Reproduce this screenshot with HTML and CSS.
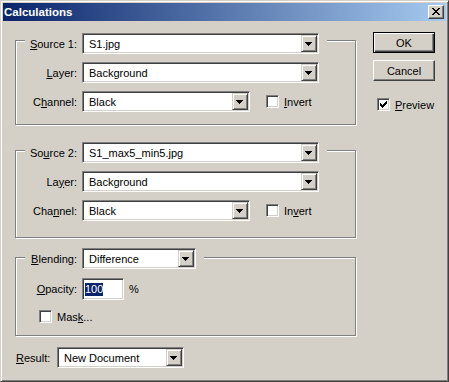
FILE: index.html
```html
<!DOCTYPE html>
<html>
<head>
<meta charset="utf-8">
<title>Calculations</title>
<link rel="stylesheet" href="styles.css">
</head>
<body>
<div class="window">
  <div class="titlebar">
    <span class="title">Calculations</span>
    <span class="close"><svg class="x" width="8" height="7" viewBox="0 0 8 7"><path d="M0 0h2v1H0zM6 0h2v1H6zM1 1h2v1H1zM5 1h2v1H5zM2 2h4v1H2zM3 3h2v1H3zM2 4h4v1H2zM1 5h2v1H1zM5 5h2v1H5zM0 6h2v1H0zM6 6h2v1H6z"/></svg></span>
  </div>
  <div class="content">
    <div class="left">
      <div class="group g1">
        <div class="row head">
          <span class="lbl"><u>S</u>ource 1:</span>
          <span class="combo w-full"><span class="val">S1.jpg</span><span class="drop"><svg width="7" height="4" viewBox="0 0 7 4"><path d="M0 0h7v1H0zM1 1h5v1H1zM2 2h3v1H2zM3 3h1v1H3z"/></svg></span></span>
        </div>
        <div class="row">
          <span class="lbl"><u>L</u>ayer:</span>
          <span class="combo w-full"><span class="val">Background</span><span class="drop"><svg width="7" height="4" viewBox="0 0 7 4"><path d="M0 0h7v1H0zM1 1h5v1H1zM2 2h3v1H2zM3 3h1v1H3z"/></svg></span></span>
        </div>
        <div class="row">
          <span class="lbl">C<u>h</u>annel:</span>
          <span class="combo w-chan"><span class="val">Black</span><span class="drop"><svg width="7" height="4" viewBox="0 0 7 4"><path d="M0 0h7v1H0zM1 1h5v1H1zM2 2h3v1H2zM3 3h1v1H3z"/></svg></span></span>
          <span class="check invert"><span class="box"></span><span class="txt"><u>I</u>nvert</span></span>
        </div>
      </div>

      <div class="group g2">
        <div class="row head">
          <span class="lbl">So<u>u</u>rce 2:</span>
          <span class="combo w-full"><span class="val">S1_max5_min5.jpg</span><span class="drop"><svg width="7" height="4" viewBox="0 0 7 4"><path d="M0 0h7v1H0zM1 1h5v1H1zM2 2h3v1H2zM3 3h1v1H3z"/></svg></span></span>
        </div>
        <div class="row">
          <span class="lbl">La<u>y</u>er:</span>
          <span class="combo w-full"><span class="val">Background</span><span class="drop"><svg width="7" height="4" viewBox="0 0 7 4"><path d="M0 0h7v1H0zM1 1h5v1H1zM2 2h3v1H2zM3 3h1v1H3z"/></svg></span></span>
        </div>
        <div class="row">
          <span class="lbl">Cha<u>n</u>nel:</span>
          <span class="combo w-chan"><span class="val">Black</span><span class="drop"><svg width="7" height="4" viewBox="0 0 7 4"><path d="M0 0h7v1H0zM1 1h5v1H1zM2 2h3v1H2zM3 3h1v1H3z"/></svg></span></span>
          <span class="check invert"><span class="box"></span><span class="txt">In<u>v</u>ert</span></span>
        </div>
      </div>

      <div class="group g3">
        <div class="row head">
          <span class="lbl"><u>B</u>lending:</span>
          <span class="combo w-blend"><span class="val">Difference</span><span class="drop"><svg width="7" height="4" viewBox="0 0 7 4"><path d="M0 0h7v1H0zM1 1h5v1H1zM2 2h3v1H2zM3 3h1v1H3z"/></svg></span></span>
        </div>
        <div class="row r-opacity">
          <span class="lbl"><u>O</u>pacity:</span>
          <span class="input"><span class="sel">100</span></span>
          <span class="pct">%</span>
        </div>
        <div class="row r-mask">
          <span class="check mask"><span class="box"></span><span class="txt">Mas<u>k</u>...</span></span>
        </div>
      </div>

      <div class="result">
        <span class="rlbl"><u>R</u>esult:</span>
        <span class="combo w-result"><span class="val">New Document</span><span class="drop"><svg width="7" height="4" viewBox="0 0 7 4"><path d="M0 0h7v1H0zM1 1h5v1H1zM2 2h3v1H2zM3 3h1v1H3z"/></svg></span></span>
      </div>
    </div>

    <div class="right">
      <button class="btn default">OK</button>
      <button class="btn">Cancel</button>
      <span class="check preview"><span class="box"><svg width="7" height="7" viewBox="0 0 7 7"><path d="M6 0h1v1H6zM5 1h2v1H5zM0 2h1v1H0zM4 2h3v1H4zM0 3h2v1H0zM3 3h3v1H3zM0 4h5v1H0zM1 5h3v1H1zM2 6h1v1H2z"/></svg></span><span class="txt"><u>P</u>review</span></span>
    </div>
  </div>
</div>
</body>
</html>
```

FILE: styles.css
```css
* {
  box-sizing: border-box;
}

html,
body {
  margin: 0;
  padding: 0;
}

body {
  width: 449px;
  height: 382px;
  overflow: hidden;
  background: #d4d0c8;
  font: 11px "Liberation Sans", Arial, sans-serif;
  color: #000;
}

svg {
  display: block;
  shape-rendering: crispEdges;
}

.window {
  width: 449px;
  height: 382px;
  border: 1px solid;
  border-color: #d4d0c8 #404040 #404040 #d4d0c8;
  box-shadow: inset 1px 1px #fff, inset -1px -1px #808080;
  padding: 2px;
  background: #d4d0c8;
}

/* Title bar */
.titlebar {
  height: 18px;
  display: flex;
  align-items: center;
  justify-content: space-between;
  background: linear-gradient(to right, #0a246a, #a6caf0);
  padding: 0 2px 0 1px;
}

.title {
  color: #fff;
  font-weight: bold;
  font-size: 11.5px;
}

.close {
  width: 16px;
  height: 14px;
  background: #d4d0c8;
  border: 1px solid;
  border-color: #fff #404040 #404040 #fff;
  box-shadow: inset -1px -1px #808080;
}

.close .x {
  margin: 2px 0 0 3px;
}

/* Main content */
.content {
  display: flex;
  padding: 11px 0 0 12px;
}

.left {
  width: 341px;
  display: flex;
  flex-direction: column;
}

.right {
  margin-left: 17px;
  display: flex;
  flex-direction: column;
  align-items: flex-start;
}

/* Group boxes (etched frame) */
.group {
  border: 1px solid #808080;
  box-shadow: 1px 1px 0 #fff, inset 1px 1px 0 #fff;
  padding: 0 0 12px 9px;
}

.g1 {
  margin-top: 8px;
}

.g2 {
  margin-top: 25px;
  padding-bottom: 16px;
}

.g3 {
  margin-top: 19px;
  padding-bottom: 12px;
}

.row {
  display: flex;
  align-items: center;
  margin-top: 8px;
}

.head {
  width: max-content;
  background: #d4d0c8;
  padding-right: 8px;
}

.g1 .head {
  margin-top: -8px;
}

.g2 .head {
  margin-top: -9px;
}

.g3 .head {
  margin-top: -10px;
}

.r-opacity {
  margin-top: 9px;
}

.r-mask {
  margin-top: 10px;
}

.lbl {
  width: 57px;
  padding-right: 5px;
  text-align: right;
  white-space: nowrap;
}

/* Combo box */
.combo {
  display: flex;
  height: 21px;
  background: #fff;
  border: 1px solid;
  border-color: #808080 #fff #fff #808080;
  box-shadow: inset 1px 1px #404040, inset -1px -1px #d4d0c8;
  padding: 1px;
}

.w-full {
  width: 237px;
}

.w-chan {
  width: 168px;
}

.w-blend {
  width: 114px;
}

.w-result {
  width: 127px;
}

.combo .val {
  flex: 1;
  padding-left: 5px;
  display: flex;
  align-items: center;
  white-space: nowrap;
  overflow: hidden;
}

.drop {
  width: 16px;
  height: 17px;
  background: #d4d0c8;
  border: 1px solid;
  border-color: #d4d0c8 #404040 #404040 #d4d0c8;
  box-shadow: inset 1px 1px #fff, inset -1px -1px #808080;
}

.drop svg {
  margin: 6px 0 0 3px;
}

/* Text input */
.input {
  width: 42px;
  height: 22px;
  background: #fff;
  border: 1px solid;
  border-color: #808080 #fff #fff #808080;
  box-shadow: inset 1px 1px #404040, inset -1px -1px #d4d0c8;
  padding: 0 0 0 2px;
  display: flex;
  align-items: center;
}

.sel {
  background: #0a246a;
  color: #fff;
  line-height: 13px;
}

.pct {
  margin-left: 5px;
}

/* Checkbox */
.check {
  display: flex;
  align-items: center;
}

.box {
  width: 13px;
  height: 13px;
  background: #fff;
  border: 1px solid;
  border-color: #808080 #fff #fff #808080;
  box-shadow: inset 1px 1px #404040, inset -1px -1px #d4d0c8;
  padding: 2px;
}

.check .txt {
  margin-left: 5px;
}

.invert {
  margin-left: 16px;
}

.mask {
  margin-left: 14px;
}

.preview {
  margin: 17px 0 0 4px;
}

/* Result row */
.result {
  display: flex;
  align-items: center;
  margin-top: 11px;
  padding-left: 1px;
}

.rlbl {
  width: 41px;
}

/* Buttons */
.btn {
  width: 62px;
  height: 21px;
  font: inherit;
  color: #000;
  background: #d4d0c8;
  border: 1px solid;
  border-color: #fff #404040 #404040 #fff;
  box-shadow: inset -1px -1px #808080;
  padding: 0;
}

.btn.default {
  border-color: #000;
  box-shadow: inset 1px 1px #fff, inset -1px -1px #404040, inset -2px -2px #808080;
}

.btn + .btn {
  margin-top: 7px;
}
```
